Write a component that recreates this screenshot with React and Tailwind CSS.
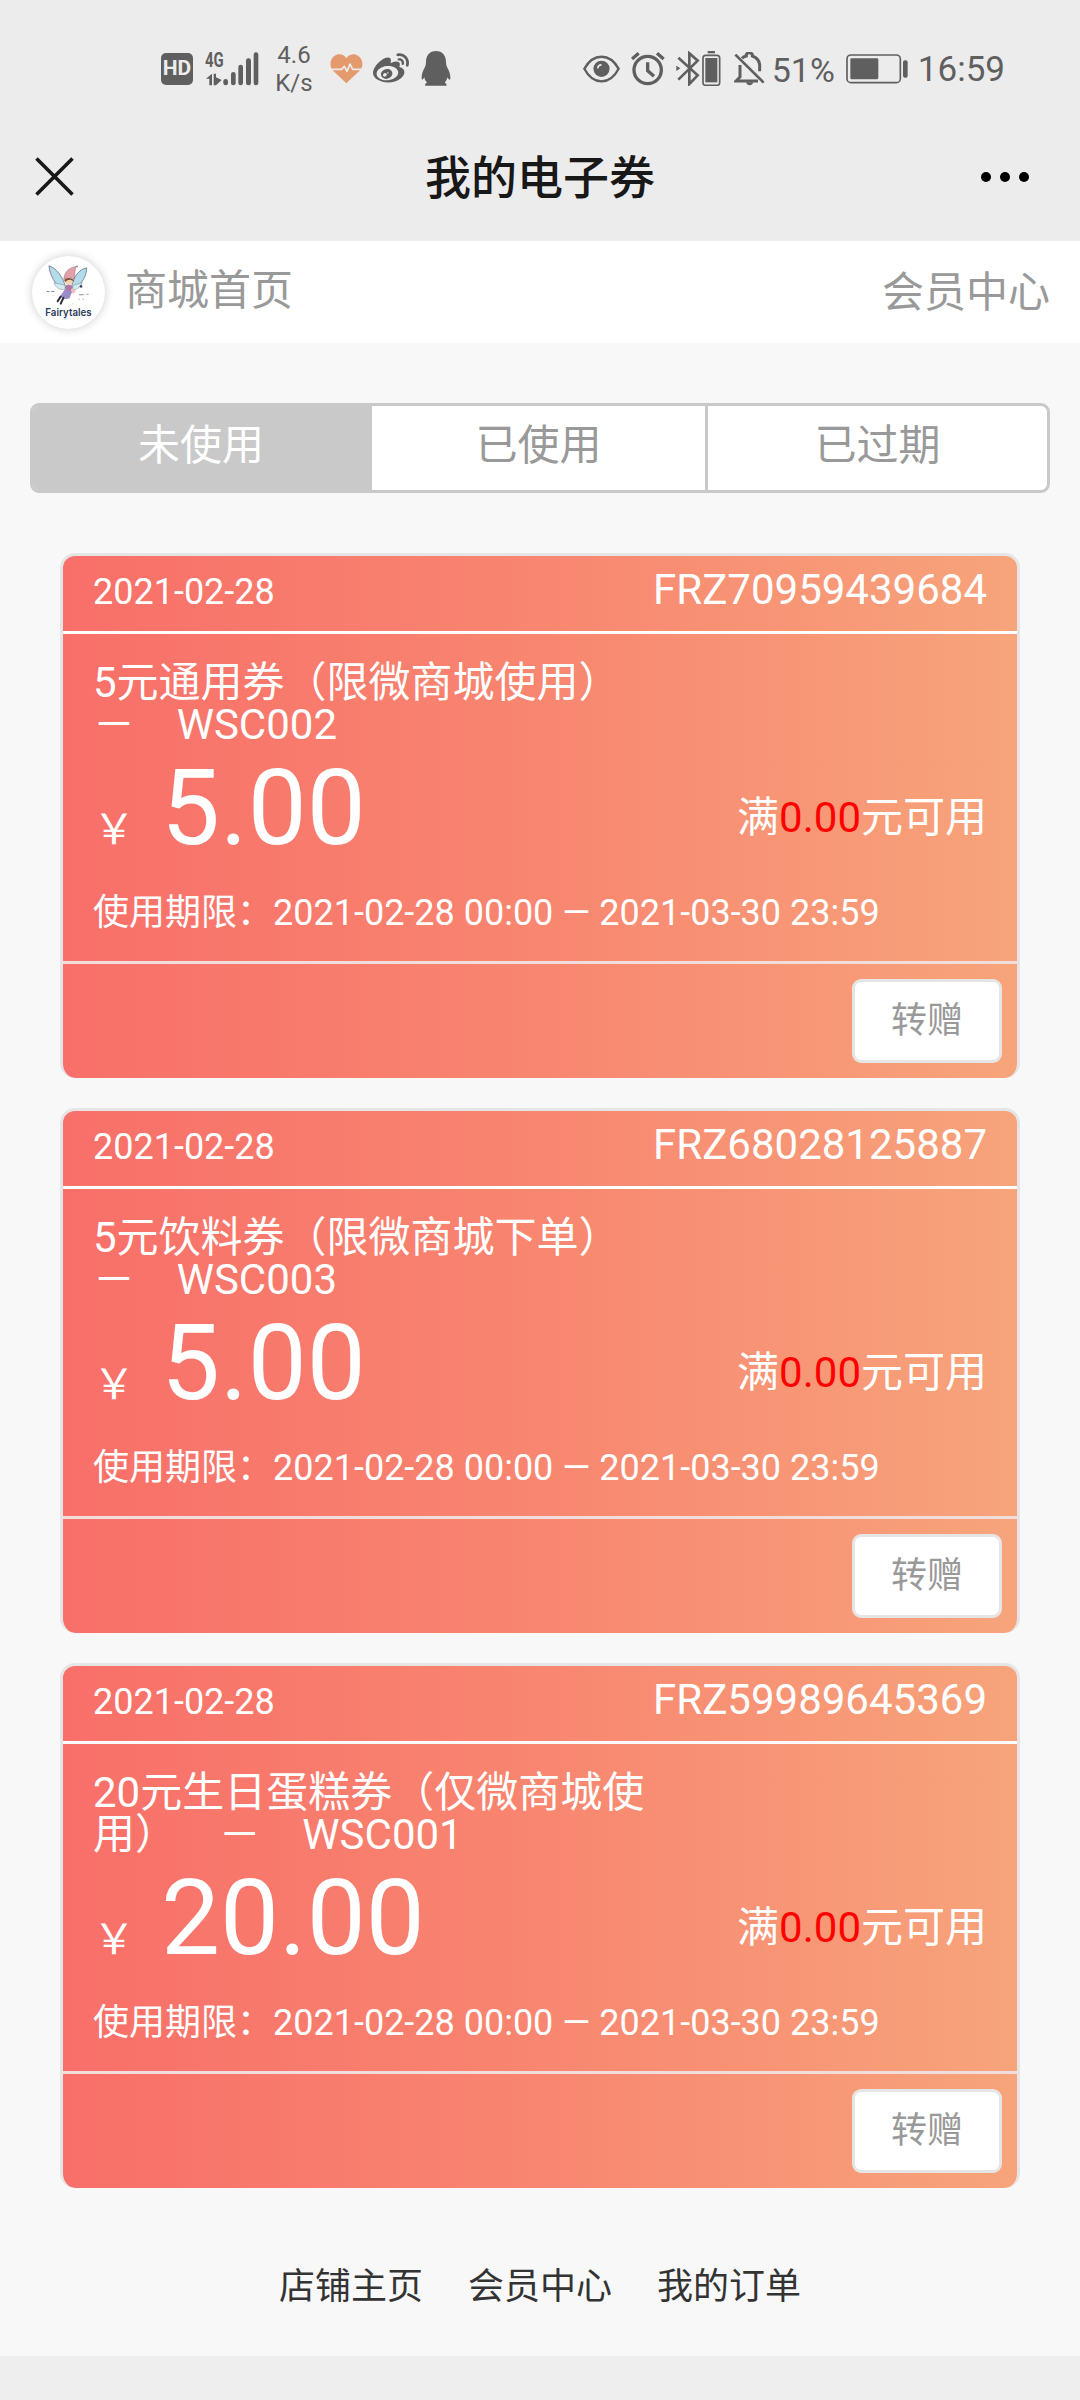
import React from 'react';
import { FaWeibo } from 'react-icons/fa';

const coupons = [
  {
    date: '2021-02-28',
    code: 'FRZ70959439684',
    title: ['5元通用券（限微商城使用）', '－\u00a0\u00a0\u00a0\u00a0WSC002'],
    amount: '5.00',
    min: '0.00',
    period: '2021-02-28 00:00 — 2021-03-30 23:59'
  },
  {
    date: '2021-02-28',
    code: 'FRZ68028125887',
    title: ['5元饮料券（限微商城下单）', '－\u00a0\u00a0\u00a0\u00a0WSC003'],
    amount: '5.00',
    min: '0.00',
    period: '2021-02-28 00:00 — 2021-03-30 23:59'
  },
  {
    date: '2021-02-28',
    code: 'FRZ59989645369',
    title: ['20元生日蛋糕券（仅微商城使', '用）\u00a0\u00a0\u00a0\u00a0－\u00a0\u00a0\u00a0\u00a0WSC001'],
    amount: '20.00',
    min: '0.00',
    period: '2021-02-28 00:00 — 2021-03-30 23:59'
  }
];

const tabs = [
  { label: '未使用', className: 'w-[339px] bg-[#c9c9c9] pr-[3px] text-white' },
  { label: '已使用', className: 'w-[336px] border-r-[3px] border-[#c9c9c9] text-[#999]' },
  { label: '已过期', className: 'flex-1 text-[#999]' }
];
const footerLinks = ['店铺主页', '会员中心', '我的订单'];

const SignalIcon = () => (
  <svg className="h-[34px] w-[54px] shrink-0 overflow-visible" viewBox="164 62 162 102" fill="#5f5f5f">
    <text x="164" y="107" fontSize="60" fontWeight="700" fontFamily="Roboto, sans-serif" textLength="56" lengthAdjust="spacingAndGlyphs">4G</text>
    <path d="M185 127v35h-8v-20h-10zM190 127h7v35h-7z" />
    <path d="M197 138l17 8-17 16z" />
    <rect x="219" y="143" width="14" height="19" rx="7" />
    <rect x="242" y="122" width="14" height="40" rx="7" />
    <rect x="264" y="100" width="14" height="62" rx="7" />
    <rect x="287" y="81" width="15" height="81" rx="7" />
    <rect x="310" y="63" width="14" height="99" rx="7" />
  </svg>
);

const HeartIcon = () => (
  <svg className="h-[30px] w-[33px] shrink-0" viewBox="541 73 99 90">
    <path d="M590 161 548 121c-10-14-6-34 6-42 12-9 29-5 36 7 8-12 24-16 36-7 13 9 17 28 6 42z" fill="#e59a6d" />
    <path d="M541 119h35l8-9 8 15 9-22 8 16h31" fill="none" stroke="#ececec" strokeWidth="5" strokeLinejoin="round" />
  </svg>
);

const PenguinIcon = () => (
  <svg className="ml-[12px] h-[35px] w-[30px] shrink-0" viewBox="814 63 90 105" fill="#5f5f5f">
    <path d="M859 63c-19 0-30 14-30 33 0 6-1 11-3 15-7 12-11 25-10 34 0 6 3 6 8-3 1 7 4 12 8 16-5 2-7 5-5 9h63c2-4 0-7-5-9 4-4 7-9 8-16 5 9 9 9 9 3 1-9-3-22-10-34-2-4-3-9-3-15 0-19-11-33-30-33z" />
  </svg>
);

const EyeIcon = () => (
  <svg className="h-[28px] w-[37px] shrink-0" viewBox="62 74 110 83" fill="none" stroke="#5f5f5f">
    <path d="M66 115c26-48 76-48 102 0-26 50-76 50-102 0z" strokeWidth="7" />
    <circle cx="117" cy="115" r="24" fill="#5f5f5f" stroke="none" />
    <path d="M106 114c0-7 4-11 11-11" stroke="#ececec" strokeWidth="5" />
  </svg>
);

const AlarmIcon = () => (
  <svg className="ml-[11px] h-[34px] w-[34px] shrink-0" viewBox="206 65 102 102" fill="none" stroke="#5f5f5f">
    <circle cx="256" cy="119" r="41" strokeWidth="10" />
    <path d="M256 96v25l19 17" strokeWidth="10" />
    <path d="m209 86 20-17M304 86l-20-17" strokeWidth="10" />
  </svg>
);

const BluetoothIcon = () => (
  <svg className="ml-[11px] h-[35px] w-[45px] shrink-0" viewBox="341 63 135 105" fill="none" stroke="#5f5f5f">
    <path d="m348 83 58 53-25 26V70l25 22-58 57" strokeWidth="8" />
    <path d="m342 107 12 8-12 8z" fill="#5f5f5f" stroke="none" />
    <rect x="422" y="76" width="50" height="90" rx="8" strokeWidth="5" />
    <rect x="429" y="84" width="36" height="73" fill="#5f5f5f" stroke="none" />
    <rect x="436" y="63" width="22" height="7" fill="#5f5f5f" stroke="none" />
  </svg>
);

const BellOffIcon = () => (
  <svg className="ml-[13px] h-[34px] w-[31px] shrink-0" viewBox="513 65 93 102" fill="none" stroke="#5f5f5f">
    <path d="m517 73 85 84" strokeWidth="8" />
    <path d="M531 104v36l-12 12h66M537 84c3-4 8-6 13-7v-5c4-6 14-6 18 0v5c14 5 21 14 22 26v20" strokeWidth="9" />
    <path d="M549 156h22c-3 12-19 12-22 0z" fill="#5f5f5f" stroke="none" />
  </svg>
);

const BatteryIcon = () => (
  <svg className="ml-[11px] h-[30px] w-[62px] shrink-0" viewBox="852 71 186 90" fill="none" stroke="#5f5f5f">
    <rect x="855" y="74" width="160" height="83" rx="12" strokeWidth="5" />
    <rect x="865" y="84" width="84" height="63" rx="4" fill="#5f5f5f" stroke="none" />
    <rect x="1023" y="90" width="14" height="52" rx="6" fill="#5f5f5f" stroke="none" />
  </svg>
);

const ShopLogo = () => (
  <svg className="h-[73px] w-[73px] shrink-0 rounded-full bg-white shadow-[0_0_10px_rgba(0,0,0,0.2)]" viewBox="39 33 216 216">
    <g stroke="#53606f" strokeWidth="2">
      <path d="M89 62c20 6 42 30 50 66-22 0-44-22-50-66z" fill="#b5dcea" />
      <path d="M201 68c-22 4-40 26-46 60 22-2 44-24 46-60z" fill="#b5dcea" />
      <path d="M104 112c4 14 16 22 32 20l2-12z" fill="#d3eaf2" strokeWidth="1" />
      <path d="M188 112c-4 12-14 20-28 22v-14z" fill="#d3eaf2" strokeWidth="1" />
    </g>
    <path d="M133 102c2-20 12-34 36-38-4 10-2 26-6 38-8-6-20-6-30 0z" fill="#e3a0ab" stroke="#9c6874" strokeWidth="1.5" />
    <circle cx="172" cy="64" r="3" fill="#8d8d95" />
    <circle cx="148" cy="108" r="11" fill="#f3d3b4" />
    <path d="M134 104c6-8 22-8 28 0l2 6-5-4-6-3-8 1-8 6z" fill="#7c5038" />
    <path d="M139 120c6-4 16-2 20 4l-4 18-18-4z" fill="#b0789f" />
    <path d="M155 130l14 4-6 10-10-4z" fill="#eebbc0" />
    <path d="M136 132l22 6-8 20c-8 4-22 2-28-6z" fill="#9c8cc8" />
    <path d="m124 153-9 14M132 157l-8 17" stroke="#2d2b38" strokeWidth="6" strokeLinecap="round" />
    <circle cx="184" cy="123" r="4" fill="#384a66" />
    <path d="M82 138h9M96 138h9M178 148h14M202 146h4" stroke="#8b8b90" strokeWidth="3" />
    <path d="M177 161h3M189 161h3M198 148h2" stroke="#8f93b8" strokeWidth="3" />
    <circle cx="101" cy="150" r="2" fill="#f0e2b8" />
    <circle cx="160" cy="174" r="3" fill="#f6e7bd" />
    <circle cx="138" cy="218" r="4" fill="#bfe0f2" />
    <text x="147" y="212" textAnchor="middle" fontSize="30" fontWeight="600" fontFamily="Inter, sans-serif" fill="#2b3c5c" textLength="137" lengthAdjust="spacingAndGlyphs">Fairytales</text>
  </svg>
);

const StatusBar = () => (
  <div className="flex h-[112px] items-center pt-[25px] pr-[75px] pl-[161px] text-[#5f5f5f]">
    <div className="flex h-8 w-8 items-center justify-center rounded-[5px] bg-[#5f5f5f] text-[21px] leading-none font-bold text-[#ececec]">HD</div>
    <div className="ml-3">
      <SignalIcon />
    </div>
    <div className="ml-[15px] w-10 text-center text-[24px] leading-[28px]">
      <div>4.6</div>
      <div>K/s</div>
    </div>
    <div className="ml-[16px] flex items-center">
      <HeartIcon />
      <FaWeibo className="ml-[10px] h-[36px] w-[36px]" />
      <PenguinIcon />
    </div>
    <div className="ml-auto flex items-center">
      <EyeIcon />
      <AlarmIcon />
      <BluetoothIcon />
      <BellOffIcon />
      <span className="ml-[7px] pt-[2px] text-[34px] leading-10">51%</span>
      <BatteryIcon />
      <span className="ml-[10px] pt-[2px] text-[35px] leading-10">16:59</span>
    </div>
  </div>
);

const NavBar = () => (
  <div className="flex h-[129px] items-center pr-[51px] pl-[35px]">
    <div className="flex-1">
      <svg className="h-[39px] w-[39px]" viewBox="0 0 39 39" stroke="#181818" strokeWidth="3.6">
        <path d="m1.5 1.5 36 36M37.5 1.5l-36 36" />
      </svg>
    </div>
    <h1 className="mr-[-16px] pt-[3px] text-[46px] leading-[48px] font-medium text-[#181818]">我的电子券</h1>
    <div className="flex flex-1 justify-end gap-[9px]">
      <span className="h-[10px] w-[10px] rounded-full bg-black" />
      <span className="h-[10px] w-[10px] rounded-full bg-black" />
      <span className="h-[10px] w-[10px] rounded-full bg-black" />
    </div>
  </div>
);

const CouponCard = ({ coupon }) => (
  <div className="h-[525px] rounded-[15px] border-[3px] border-b-0 border-[#e5e5e5] bg-linear-to-r/srgb from-[#f86f69] via-[#f88670] to-[#f7a47b] bg-origin-border text-white">
    <div className="flex h-[78px] items-baseline justify-between border-b-[3px] border-white px-[30px]">
      <span className="text-[36px] leading-[68px]">{coupon.date}</span>
      <span className="text-[42px] leading-[68px]">{coupon.code}</span>
    </div>
    <div className="h-[330px] border-b-[3px] border-[#f1dedc] px-[30px] pt-[28px]">
      <div className="text-[42px] leading-[42px] whitespace-nowrap">
        <p>{coupon.title[0]}</p>
        <p>{coupon.title[1]}</p>
      </div>
      <div className="flex h-[125px] items-start justify-between">
        <div className="flex items-baseline">
          <span className="text-[42px] leading-none">￥</span>
          <span className="ml-[26px] text-[105px] leading-[125px]">{coupon.amount}</span>
        </div>
        <p className="mt-[42px] text-[42px] leading-[60px]">
          满<span className="text-[#ff0000]">{coupon.min}</span>元可用
        </p>
      </div>
      <p className="mt-[15px] text-[36px] leading-[54px] whitespace-nowrap">使用期限：{coupon.period}</p>
    </div>
    <div className="flex justify-end pt-[15px] pr-[15px]">
      <button className="h-[84px] w-[150px] rounded-[9px] border-[3px] border-[#e5e5e5] bg-white text-[36px] leading-none text-[#999]">转赠</button>
    </div>
  </div>
);

const App = () => {
  return (
    <div className="h-[2400px] w-[1080px] overflow-hidden bg-[#eeeeee] font-['Roboto','Noto_Sans_CJK_SC',sans-serif]">
      <header className="bg-[#ececec]">
        <StatusBar />
        <NavBar />
      </header>

      <main className="h-[2115px] bg-[#f8f8f8]">
        {/* Shop bar */}
        <div className="flex h-[102px] items-center justify-between bg-white pr-[30px] pl-[32px] text-[42px] leading-none text-[#999]">
          <div className="flex items-center">
            <ShopLogo />
            <span className="ml-[20px] pb-[3px]">商城首页</span>
          </div>
          <span className="pt-[2px]">会员中心</span>
        </div>

        {/* Tabs */}
        <div className="mx-[30px] mt-[60px] flex h-[90px] overflow-hidden rounded-[9px] border-[3px] border-[#c9c9c9] bg-white text-[42px] leading-none">
          {tabs.map((tab) => (
            <button key={tab.label} className={`pb-[4px] ${tab.className}`}>
              {tab.label}
            </button>
          ))}
        </div>

        {/* Coupons */}
        <div className="mx-[60px] mt-[60px] flex flex-col gap-[30px]">
          {coupons.map((coupon) => (
            <CouponCard key={coupon.code} coupon={coupon} />
          ))}
        </div>

        <div className="mt-[72px] flex justify-center gap-[45px] text-[36px] leading-[54px] text-[#333]">
          {footerLinks.map((link) => (
            <span key={link}>{link}</span>
          ))}
        </div>
      </main>
    </div>
  );
};

export default App;
